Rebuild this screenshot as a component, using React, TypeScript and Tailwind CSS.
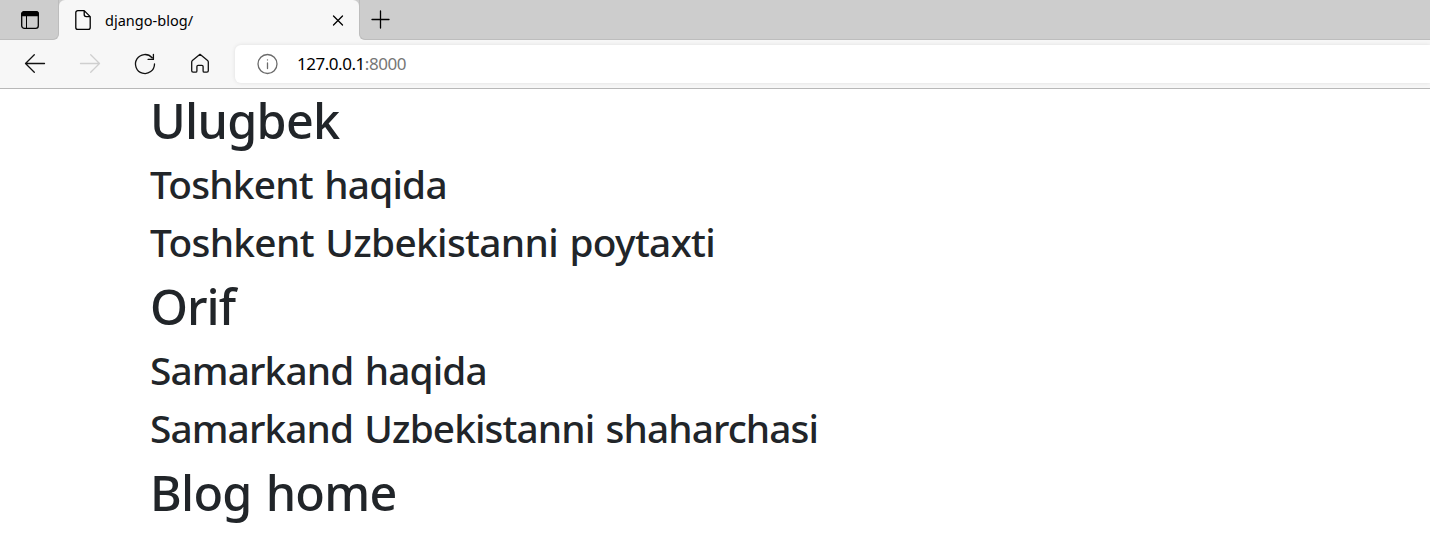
import type { ReactNode } from 'react';

const posts = [
  {
    author: 'Ulugbek',
    authorTracking: 'tracking-[-0.7px]',
    title: 'Toshkent haqida',
    titleTracking: 'tracking-[-0.78px]',
    body: 'Toshkent Uzbekistanni poytaxti',
    bodyTracking: 'tracking-[-0.66px]',
  },
  {
    author: 'Orif',
    authorTracking: 'tracking-[-1px]',
    title: 'Samarkand haqida',
    titleTracking: 'tracking-[-0.85px]',
    body: 'Samarkand Uzbekistanni shaharchasi',
    bodyTracking: 'tracking-[-0.89px]',
  },
];

function Icon({ children, className = '' }: { children: ReactNode; className?: string }) {
  return (
    <svg width="24" height="24" viewBox="0 0 24 24" fill="none" stroke="currentColor" strokeWidth="1.3" strokeLinecap="round" strokeLinejoin="round" className={`shrink-0 ${className}`}>
      {children}
    </svg>
  );
}

function TabStrip() {
  return (
    <div className="flex h-10 bg-[#f7f7f7]">
      <div className="flex w-[59px] shrink-0 rounded-br-md border-b border-r border-[#bdbdbd] bg-[#cdcdcd] pl-[18px] pt-2">
        <Icon>
          <rect x="3.7" y="3.7" width="16.6" height="16.6" rx="2.6" />
          <path d="M3.7 7.5V6.3a2.6 2.6 0 0 1 2.6-2.6h11.4a2.6 2.6 0 0 1 2.6 2.6v1.2z" fill="currentColor" />
          <path d="M8.5 8v12" strokeWidth="1" />
        </Icon>
      </div>
      <div className="w-[300px] shrink-0 bg-gradient-to-b from-[#cdcdcd] from-50% to-[#f7f7f7] to-50%">
        <div className="flex h-10 items-center rounded-t-md bg-[#f7f7f7] pl-3">
          <Icon>
            <path d="M13.2 2.6H6.8A2 2 0 0 0 4.8 4.6v14.8a2 2 0 0 0 2 2h10.4a2 2 0 0 0 2-2V8.6zM13.2 2.6v4a2 2 0 0 0 2 2h4" />
          </Icon>
          <span className="ml-[10px] w-[221px] whitespace-nowrap text-[14.5px] leading-5 tracking-[0.02px] text-black">django-blog/</span>
          <Icon>
            <path d="M7.5 8l9 9M16.5 8l-9 9" />
          </Icon>
        </div>
      </div>
      <div className="flex flex-1 rounded-bl-md border-b border-l border-[#bdbdbd] bg-[#cdcdcd] pl-2 pt-[7px]">
        <Icon>
          <path d="M12.5 4v17M4 12.5h17" />
        </Icon>
      </div>
    </div>
  );
}

function Toolbar() {
  return (
    <div className="flex h-[49px] border-b border-[#b8b8b8] bg-[#f7f7f7] pl-[23px]">
      <div className="flex w-[212px] shrink-0 gap-[31px] pt-3 text-[#111]">
        <Icon>
          <path d="M21.5 11.5H2.5M11.3 2.8L2.5 11.5l8.8 8.7" />
        </Icon>
        <Icon className="text-[#cfcfcf]">
          <path d="M2.5 11.5h19M12.7 2.8l8.8 8.7-8.8 8.7" />
        </Icon>
        <Icon>
          <path d="M21.5 12a9.5 9.5 0 1 1-2.4-6.3M20.4 2.3v5.1h-5.3" />
        </Icon>
        <Icon>
          <path d="M3.7 9.9c0-.6.2-1.1.7-1.5L12 2.3l7.6 6.1c.5.4.7.9.7 1.5v8.9c0 .8-.5 1.4-1.4 1.4h-2.6c-.7 0-1.2-.5-1.2-1.2v-4.5c0-.8-.4-1.2-1.2-1.2h-3.8c-.8 0-1.2.4-1.2 1.2V19c0 .7-.5 1.2-1.2 1.2H5.1c-.9 0-1.4-.6-1.4-1.4z" />
        </Icon>
      </div>
      <div className="mt-[5px] flex h-[38px] flex-1 items-center rounded-l-md bg-white pl-5 shadow-[0_0_4px_rgba(0,0,0,0.10)]">
        <Icon className="text-[#6b6b6b]">
          <circle cx="12.5" cy="12" r="9.5" />
          <path d="M12.5 11v5.5M12.5 7.8v.1" />
        </Icon>
        <span className="ml-[18px] whitespace-nowrap text-[17px] leading-6 tracking-[-0.47px] text-black">
          127.0.0.1<span className="text-[#767676]">:8000</span>
        </span>
      </div>
    </div>
  );
}

function Heading({ children, className = '' }: { children: ReactNode; className?: string }) {
  return <h1 className={`mb-[10px] h-[60px] whitespace-nowrap text-[48.5px] font-medium leading-[59px] [word-spacing:2px] ${className}`}>{children}</h1>;
}

function Subheading({ children, className = '' }: { children: ReactNode; className?: string }) {
  return <h2 className={`mb-[10px] h-12 whitespace-nowrap text-[38.8px] font-medium leading-[47px] [word-spacing:2px] ${className}`}>{children}</h2>;
}

export default function App() {
  return (
    <div className="h-[555px] overflow-hidden bg-white font-['Noto_Sans',sans-serif]">
      <TabStrip />
      <Toolbar />
      <main className="pl-[150px] pt-[2px] text-[#212529]">
        {posts.map((post) => (
          <article key={post.author}>
            <Heading className={post.authorTracking}>{post.author}</Heading>
            <Subheading className={post.titleTracking}>{post.title}</Subheading>
            <Subheading className={post.bodyTracking}>{post.body}</Subheading>
          </article>
        ))}
        <Heading className="tracking-[-0.7px]">Blog home</Heading>
      </main>
    </div>
  );
}
